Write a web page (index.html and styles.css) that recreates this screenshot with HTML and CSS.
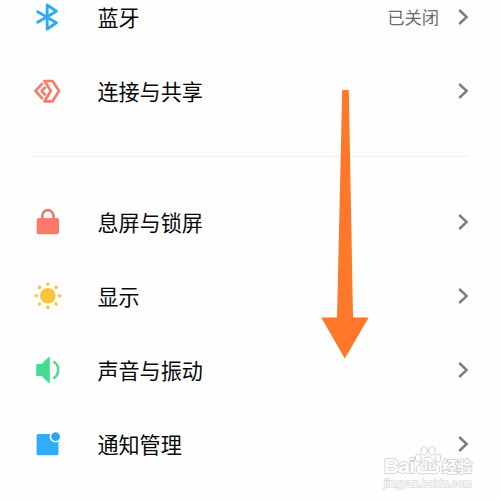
FILE: index.html
```html
<!DOCTYPE html>
<html lang="zh-CN">
<head>
<meta charset="utf-8">
<title>设置</title>
<link rel="stylesheet" href="styles.css">
</head>
<body>
<main class="screen">
  <section class="group">
    <div class="row">
      <svg class="icon" viewBox="0 0 30 30"><path d="M4.7 9.8 L23.4 20.8 L14.2 27 V3 L23.4 9.2 L4.7 20.2" fill="none" stroke="#2fa9f5" stroke-width="2.9" stroke-linejoin="round" stroke-linecap="round"/></svg>
      <span class="label">蓝牙</span>
      <span class="value">已关闭</span>
      <svg class="chevron" viewBox="0 0 12 18"><path d="M2.2 2 L9.7 9 L2.2 16"/></svg>
    </div>
    <div class="row">
      <svg class="icon" viewBox="0 0 30 30"><g fill="none" stroke="#f27f6c" stroke-width="2.7" stroke-linejoin="round"><path d="M11.5 5 H19.5 L26 15 L19.5 25.3 H11.5 L17.8 15 Z"/><path d="M9.8 7.2 L2.5 15 L9.8 23"/><path d="M12.6 10.8 L8.7 15 L12.6 19.4"/></g></svg>
      <span class="label">连接与共享</span>
      <svg class="chevron" viewBox="0 0 12 18"><path d="M2.2 2 L9.7 9 L2.2 16"/></svg>
    </div>
  </section>
  <hr class="divider">
  <section class="group">
    <div class="row">
      <svg class="icon" viewBox="0 0 30 30"><rect x="3.7" y="11" width="22.3" height="16.3" rx="2" fill="#fb7a67"/><path d="M9.3 12 V8.8 a5.6 5.6 0 0 1 11.2 0 V12" fill="none" stroke="#ef7c6b" stroke-width="2.7"/></svg>
      <span class="label">息屏与锁屏</span>
      <svg class="chevron" viewBox="0 0 12 18"><path d="M2.2 2 L9.7 9 L2.2 16"/></svg>
    </div>
    <div class="row">
      <svg class="icon" viewBox="0 0 30 30"><g fill="#fdc23e"><circle cx="14.8" cy="14.7" r="7.8"/><circle cx="14.8" cy="3" r="1.8"/><circle cx="23.1" cy="6.4" r="1.8"/><circle cx="26.5" cy="14.7" r="1.8"/><circle cx="23.1" cy="23" r="1.8"/><circle cx="14.8" cy="26.4" r="1.8"/><circle cx="6.5" cy="23" r="1.8"/><circle cx="3.1" cy="14.7" r="1.8"/><circle cx="6.5" cy="6.4" r="1.8"/></g></svg>
      <span class="label">显示</span>
      <svg class="chevron" viewBox="0 0 12 18"><path d="M2.2 2 L9.7 9 L2.2 16"/></svg>
    </div>
    <div class="row">
      <svg class="icon" viewBox="0 0 30 30"><path d="M4.2 9 H8.6 L15.2 2.4 Q16.8 1.2 16.8 3 V27 Q16.8 28.8 15.2 27.6 L8.6 21 H4.2 Q3.2 21 3.2 20 V10 Q3.2 9 4.2 9 Z" fill="#41dc8c"/><path d="M20.3 6.7 C26.8 10 26.8 20 20.3 23.3" fill="none" stroke="#50d994" stroke-width="2.5"/></svg>
      <span class="label">声音与振动</span>
      <svg class="chevron" viewBox="0 0 12 18"><path d="M2.2 2 L9.7 9 L2.2 16"/></svg>
    </div>
    <div class="row">
      <svg class="icon" viewBox="0 0 30 30"><rect x="3.6" y="5" width="21.9" height="21.3" rx="1.7" fill="#30acfc"/><circle cx="22.6" cy="7.6" r="5.2" fill="#2ea5f4" stroke="#fff" stroke-width="1.6"/></svg>
      <span class="label">通知管理</span>
      <svg class="chevron" viewBox="0 0 12 18"><path d="M2.2 2 L9.7 9 L2.2 16"/></svg>
    </div>
  </section>
  <svg class="arrow" viewBox="0 0 50 272"><path d="M22.2 2 H28.8 L33 229.5 H48.7 L24.8 270.5 L1.2 229.5 H17 Z"/></svg>
  <div class="watermark">
    <div class="brand"><span class="bai">Bai</span><span class="paw"><svg viewBox="0 0 28 32"><g><ellipse cx="4.2" cy="13" rx="3" ry="4"/><ellipse cx="10.2" cy="5.8" rx="3.2" ry="4.2"/><ellipse cx="18" cy="5.8" rx="3.2" ry="4.2"/><ellipse cx="24" cy="13" rx="3" ry="4"/><path d="M14 12 C9 12 8 17 4.5 20 C0 24 3 29.5 8 29 Q14 28 20 29 C25 29.5 28 24 23.5 20 C20 17 19 12 14 12 Z"/></g></svg><b>du</b></span><span class="jy">经验</span></div>
    <div class="site">jingyan.baidu.com</div>
  </div>
</main>
</body>
</html>
```
FILE: styles.css
```css
body {
  margin: 0;
  background: #fefefe;
  font-family: "Noto Sans CJK SC", sans-serif;
}
.screen {
  position: relative;
  height: 500px;
  overflow: hidden;
}
.group {
  padding: 0 31.5px 0 33px;
}
.group:first-child {
  margin-top: -20px;
}
.row {
  display: flex;
  align-items: center;
  height: 74px;
}
.icon {
  width: 30px;
  height: 30px;
  margin-right: 34.4px;
}
.label {
  flex: 1;
  font-size: 21.1px;
  line-height: 30px;
  color: #080808;
}
.value {
  margin-right: 17.5px;
  font-size: 17.3px;
  line-height: 26px;
  color: #6c6c6c;
}
.chevron {
  width: 12px;
  height: 18px;
}
.chevron path {
  fill: none;
  stroke: #7d7d7d;
  stroke-width: 2.4;
}
.divider {
  height: 1px;
  margin: 28px 31px 28px 32px;
  border: 0;
  background: #f0f0f0;
}
.arrow {
  position: absolute;
  left: 320px;
  top: 88px;
  width: 50px;
  height: 272px;
  fill: #ff7728;
}
.watermark {
  position: absolute;
  left: 384px;
  top: 446px;
  width: 92px;
  font-family: "Liberation Sans", "Noto Sans CJK SC", sans-serif;
  color: #fff;
  paint-order: stroke fill;
  -webkit-text-stroke: 1.7px #cfcfcf;
}
.brand {
  display: flex;
  align-items: flex-end;
  height: 31px;
}
.bai {
  width: 30px;
  font-size: 21px;
  line-height: 23px;
  font-weight: bold;
  letter-spacing: -0.8px;
}
.paw {
  position: relative;
  width: 28px;
  height: 32px;
}
.paw svg {
  width: 28px;
  height: 32px;
  fill: #fff;
  stroke: #d2d2d2;
  stroke-width: 1;
  paint-order: normal;
}
.paw b {
  position: absolute;
  left: 6px;
  top: 14px;
  font-size: 13px;
  line-height: 14px;
}
.jy {
  font-size: 15px;
  line-height: 20px;
  font-weight: bold;
  white-space: nowrap;
}
.site {
  font-size: 10.5px;
  line-height: 13px;
  letter-spacing: 0.2px;
  -webkit-text-stroke: 1.4px #dcdcdc;
}
```
